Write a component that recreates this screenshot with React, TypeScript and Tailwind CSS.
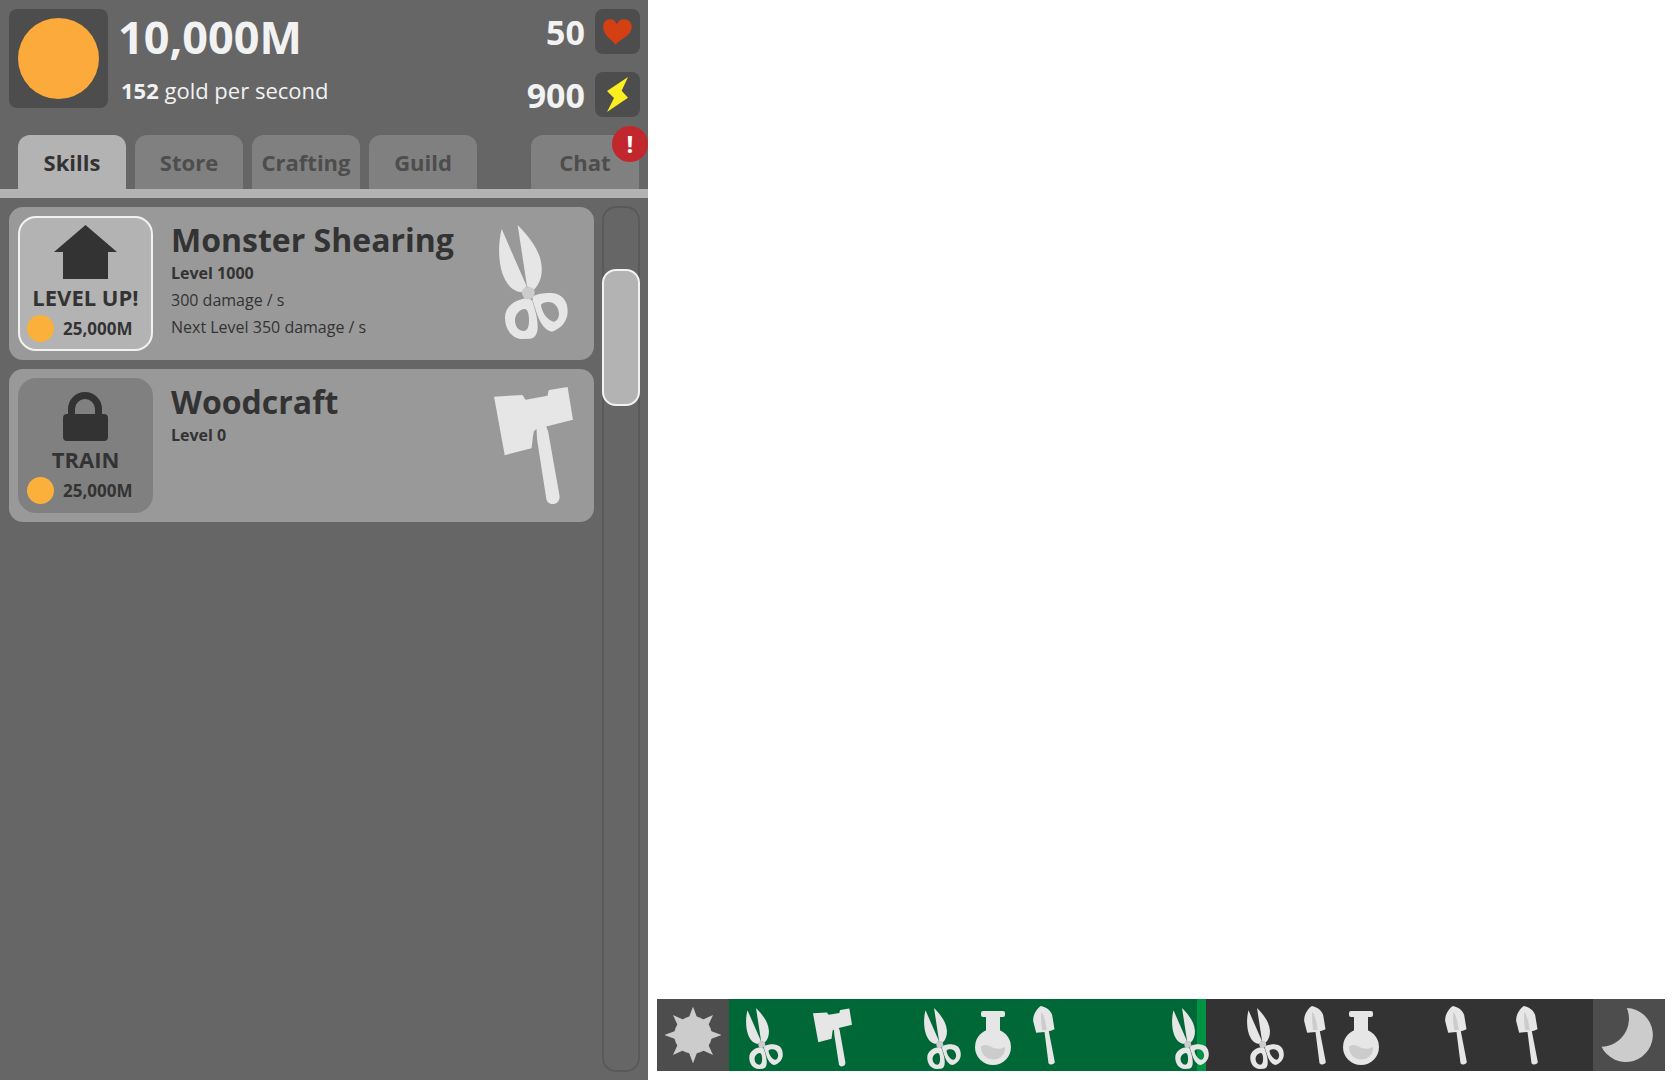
import React, { useState } from 'react';

type IconProps = { className?: string };

function Scissors({ className }: IconProps) {
  return (
    <svg viewBox="57 30 207 342" className={className} aria-hidden="true">
      <g fill="#e6e6e6" fillRule="evenodd">
        <path d="M65 42C57 75 55 108 60 145C67 192 90 230 125 232L140 214Z" />
        <path d="M113 30L141 214L162 224C181 206 187 178 185 155C182 112 155 73 113 30Z" />
        <path d="M146 249C115 251 75 268 75 308C75 345 98 372 128 372L150 371C168 369 174 352 173 330C172 303 164 282 157 258ZM134 282C118 283 104 300 105 318C106 336 117 349 133 348C144 346 147 332 147 315C147 300 144 282 134 282Z" />
        <path d="M160 243C172 237 195 233 215 234C247 236 264 258 263 292C262 322 240 342 216 350C197 348 181 325 172 300L157 254ZM183 269C188 262 200 260 208 261C226 263 237 279 237 298C236 311 229 321 220 320C203 315 185 293 183 269Z" />
      </g>
      <circle cx="145" cy="234" r="19" fill="#cccccc" />
    </svg>
  );
}

function Axe({ className }: IconProps) {
  return (
    <svg viewBox="41 36 236 350" className={className} aria-hidden="true">
      <path
        fill="#e6e6e6"
        d="M41 65L126 60C129 63 131 71 136 74L201 62C203 57 202 48 206 45L261 36L277 134L197 154C201 163 204 170 205 182L237 362C238 377 229 386 216 386C205 386 197 378 197 368L170 195L168 162L160 168C156 185 156 205 153 219L73 240Z"
      />
    </svg>
  );
}

function Shovel({ className }: IconProps) {
  return (
    <svg viewBox="400 47 65 177" className={className} aria-hidden="true">
      <path
        fill="#e6e6e6"
        d="M423 47C439 51 452 59 457 74L464 117C458 120 452 122 447 123L465 216C464 222 451 226 446 219L434 125L409 127L400 92C399 75 409 56 423 47Z"
      />
      <path fill="#cccccc" d="M424 65C433 72 437 96 441 119L427 120C424 102 423 85 424 65Z" />
    </svg>
  );
}

function Flask({ className }: IconProps) {
  return (
    <svg viewBox="225 63 108 162" className={className} aria-hidden="true">
      <g fill="#e6e6e6">
        <rect x="243" y="63" width="72" height="18" rx="6" />
        <rect x="258" y="72" width="42" height="60" />
        <circle cx="279" cy="171" r="54" />
      </g>
      <path
        fill="#cccccc"
        d="M243 170C254 160 267 167 279 173C293 179 307 176 315 170C317 194 300 208 281 208C260 208 242 193 243 170Z"
      />
    </svg>
  );
}

function Sun({ className }: IconProps) {
  return (
    <svg viewBox="-82 -82 164 164" className={className} fill="#cccccc" aria-hidden="true">
      <circle r="55" />
      {[0, 45, 90, 135, 180, 225, 270, 315].map((angle) => (
        <path key={angle} d="M0 -83L-13 -48H13Z" transform={`rotate(${angle})`} />
      ))}
    </svg>
  );
}

function Moon({ className }: IconProps) {
  return (
    <svg viewBox="546 51 153 162" className={className} aria-hidden="true">
      <path fill="#cccccc" d="M622 51A81 81 0 1 1 546 167A84 84 0 0 0 622 51Z" />
    </svg>
  );
}

function Heart({ className }: IconProps) {
  return (
    <svg viewBox="819 58 87 79" className={className} aria-hidden="true">
      <path
        fill="#d43f14"
        d="M857 137C852 124 819 111 819 82C819 66 829 59 840 59C850 59 858 65 860 74C864 65 873 59 883 59C896 59 906 69 906 82C904 111 870 117 857 137Z"
      />
    </svg>
  );
}

function Bolt({ className }: IconProps) {
  return (
    <svg viewBox="828 231 63 105" className={className} aria-hidden="true">
      <path fill="#fcee21" d="M891 231L828 273L849 294L828 336L891 293L872 272Z" />
    </svg>
  );
}

function House({ className }: IconProps) {
  return (
    <svg viewBox="0 0 63 54" className={className} aria-hidden="true">
      <path fill="#333333" d="M31.500 0L63 27H54V54H9V27H0Z" />
    </svg>
  );
}

function Padlock({ className }: IconProps) {
  return (
    <svg viewBox="0 0 45 49" className={className} aria-hidden="true">
      <rect y="22" width="45" height="27" rx="4" fill="#333333" />
      <path d="M8.500 25V17A13.500 13.500 0 0 1 35.500 17V25" fill="none" stroke="#333333" strokeWidth="7" />
    </svg>
  );
}

const tabs = ['Skills', 'Store', 'Crafting', 'Guild', 'Chat'];

const timeline = [
  { kind: 'scissors', at: 17 },
  { kind: 'axe', at: 84 },
  { kind: 'scissors', at: 195 },
  { kind: 'flask', at: 246 },
  { kind: 'shovel', at: 304 },
  { kind: 'scissors', at: 443 },
  { kind: 'scissors', at: 518 },
  { kind: 'shovel', at: 575 },
  { kind: 'flask', at: 614 },
  { kind: 'shovel', at: 716 },
  { kind: 'shovel', at: 787 },
];
const TIMELINE_LENGTH = 864;

function TimelineIcon({ kind }: { kind: string }) {
  if (kind === 'scissors') return <Scissors className="mt-[9px] h-[61px] w-[37px]" />;
  if (kind === 'axe') return <Axe className="mt-[9px] h-[59px] w-[39px]" />;
  if (kind === 'flask') return <Flask className="mt-[12px] h-[54px] w-[36px]" />;
  return <Shovel className="mt-[7px] h-[59px] w-[22px]" />;
}

function Stat({ value, label, children }: { value: string; label: string; children: React.ReactNode }) {
  return (
    <div className="flex items-center gap-[10px]" aria-label={label}>
      <span className="pt-[2px] text-[34px] leading-[43px] font-bold">{value}</span>
      <span className="flex size-[45px] items-center justify-center rounded-lg bg-[#4d4d4d]">{children}</span>
    </div>
  );
}

type SkillProps = {
  name: string;
  level: string;
  details: string[];
  action: string;
  ready?: boolean;
  icon: React.ReactNode;
  art: React.ReactNode;
};

function SkillCard({ name, level, details, action, ready, icon, art }: SkillProps) {
  return (
    <li className="flex rounded-[14px] bg-[#999999] p-[9px]">
      <button
        className={
          'flex size-[135px] shrink-0 flex-col items-center rounded-[18px] border-2 ' +
          (ready ? 'border-[#f2f2f2] bg-[#b3b3b3]' : 'border-[#808080] bg-[#808080]')
        }
      >
        <span className="flex h-[61px] items-end">{icon}</span>
        <span className="mt-[3px] text-[22px] leading-[30px] font-bold whitespace-nowrap">{action}</span>
        <span className="mt-[3px] flex items-center gap-[9px] self-start pl-[7px]">
          <span className="size-[27px] rounded-full bg-[#fbb03b]" />
          <span className="text-[17px] leading-[25px] font-bold">25,000M</span>
        </span>
      </button>
      <div className="ml-[18px] min-w-0 flex-1 pt-[4px]">
        <h2 className="text-[32px] leading-[40px] font-bold whitespace-nowrap">{name}</h2>
        <p className="text-[16px] leading-[27px] font-bold">{level}</p>
        {details.map((line) => (
          <p key={line} className="text-[16px] leading-[27px]">{line}</p>
        ))}
      </div>
      {art}
    </li>
  );
}

export default function App() {
  const [active, setActive] = useState('Skills');
  return (
    <div className="grid min-h-screen grid-cols-[648fr_1027fr] bg-white font-['Open_Sans','Noto_Sans',sans-serif] text-[#333333]">
      <aside className="flex min-w-0 flex-col bg-[#666666]">
        <header className="flex p-[9px] pr-[8px] text-[#f2f2f2]">
          <div className="flex size-[99px] shrink-0 items-center justify-center rounded-lg bg-[#4d4d4d]">
            <div className="size-[81px] rounded-full bg-[#fbaa3b]" />
          </div>
          <div className="ml-[10px]">
            <p className="text-[45px] leading-[56px] font-bold">10,000M</p>
            <p className="mt-[9px] pl-[3px] text-[22px] leading-[32px]">
              <strong className="font-bold">152</strong> gold per second
            </p>
          </div>
          <div className="ml-auto flex flex-col items-end gap-[18px]">
            <Stat value="50" label="Health">
              <Heart className="h-[26px] w-[29px]" />
            </Stat>
            <Stat value="900" label="Energy">
              <Bolt className="h-[35px] w-[21px]" />
            </Stat>
          </div>
        </header>

        <nav role="tablist" className="mt-[9px] flex gap-[9px] border-b-[9px] border-[#b3b3b3] pr-[9px] pl-[18px]">
          {tabs.map((tab) => (
            <button
              key={tab}
              role="tab"
              aria-selected={tab === active}
              onClick={() => setActive(tab)}
              className={
                'relative h-[54px] w-[108px] rounded-t-[12px] text-[22px] leading-[54px] font-bold ' +
                (tab === 'Chat' ? 'ml-auto ' : '') +
                (tab === active ? 'bg-[#b3b3b3] text-[#333333]' : 'bg-[#808080] text-[#4d4d4d]')
              }
            >
              {tab}
              {tab === 'Chat' && (
                <span className="absolute -top-[9px] -right-[9px] size-[36px] rounded-full bg-[#c1272d] text-center text-[24px] leading-[36px] text-white">
                  !
                </span>
              )}
            </button>
          ))}
        </nav>

        <div className="flex flex-1 gap-2 pt-2 pr-2 pb-2 pl-[9px]">
          <ul className="mt-px flex min-w-0 flex-1 flex-col gap-[9px]">
            <SkillCard
              name="Monster Shearing"
              level="Level 1000"
              details={['300 damage / s', 'Next Level 350 damage / s']}
              action="LEVEL UP!"
              ready
              icon={<House className="h-[54px] w-[63px]" />}
              art={<Scissors className="mt-[9px] mr-[17px] h-[114px] w-[69px] shrink-0" />}
            />
            <SkillCard
              name="Woodcraft"
              level="Level 0"
              details={[]}
              action="TRAIN"
              icon={<Padlock className="h-[49px] w-[45px]" />}
              art={<Axe className="mt-[9px] mr-[12px] h-[117px] w-[79px] shrink-0" />}
            />
          </ul>
          <div
            role="scrollbar"
            aria-label="Skills list"
            aria-orientation="vertical"
            aria-valuenow={8}
            className="w-[38px] shrink-0 rounded-[14px] border-2 border-[#595959] pt-[61px]"
          >
            <div className="-mx-0.5 h-[137px] rounded-[14px] border-2 border-[#f2f2f2] bg-[#b3b3b3]" />
          </div>
        </div>
      </aside>

      <main className="flex min-w-0 flex-col justify-end pr-[10px] pb-[9px] pl-[9px]">
        <div className="flex h-[72px]">
          <div className="flex w-[72px] shrink-0 items-center justify-center bg-[#4d4d4d]">
            <Sun className="size-[56px]" />
          </div>
          <div className="relative flex min-w-0 flex-1 bg-[#333333]">
            <div className="w-[55.2%] border-r-[9px] border-[#009245] bg-[#006837]" />
            {timeline.map(({ kind, at }) => (
              <div key={at} className="absolute top-0" style={{ left: `${(at / TIMELINE_LENGTH) * 100}%` }}>
                <TimelineIcon kind={kind} />
              </div>
            ))}
          </div>
          <div className="flex w-[72px] shrink-0 items-center justify-center bg-[#4d4d4d]">
            <Moon className="mr-[4px] h-[54px] w-[52px]" />
          </div>
        </div>
      </main>
    </div>
  );
}
